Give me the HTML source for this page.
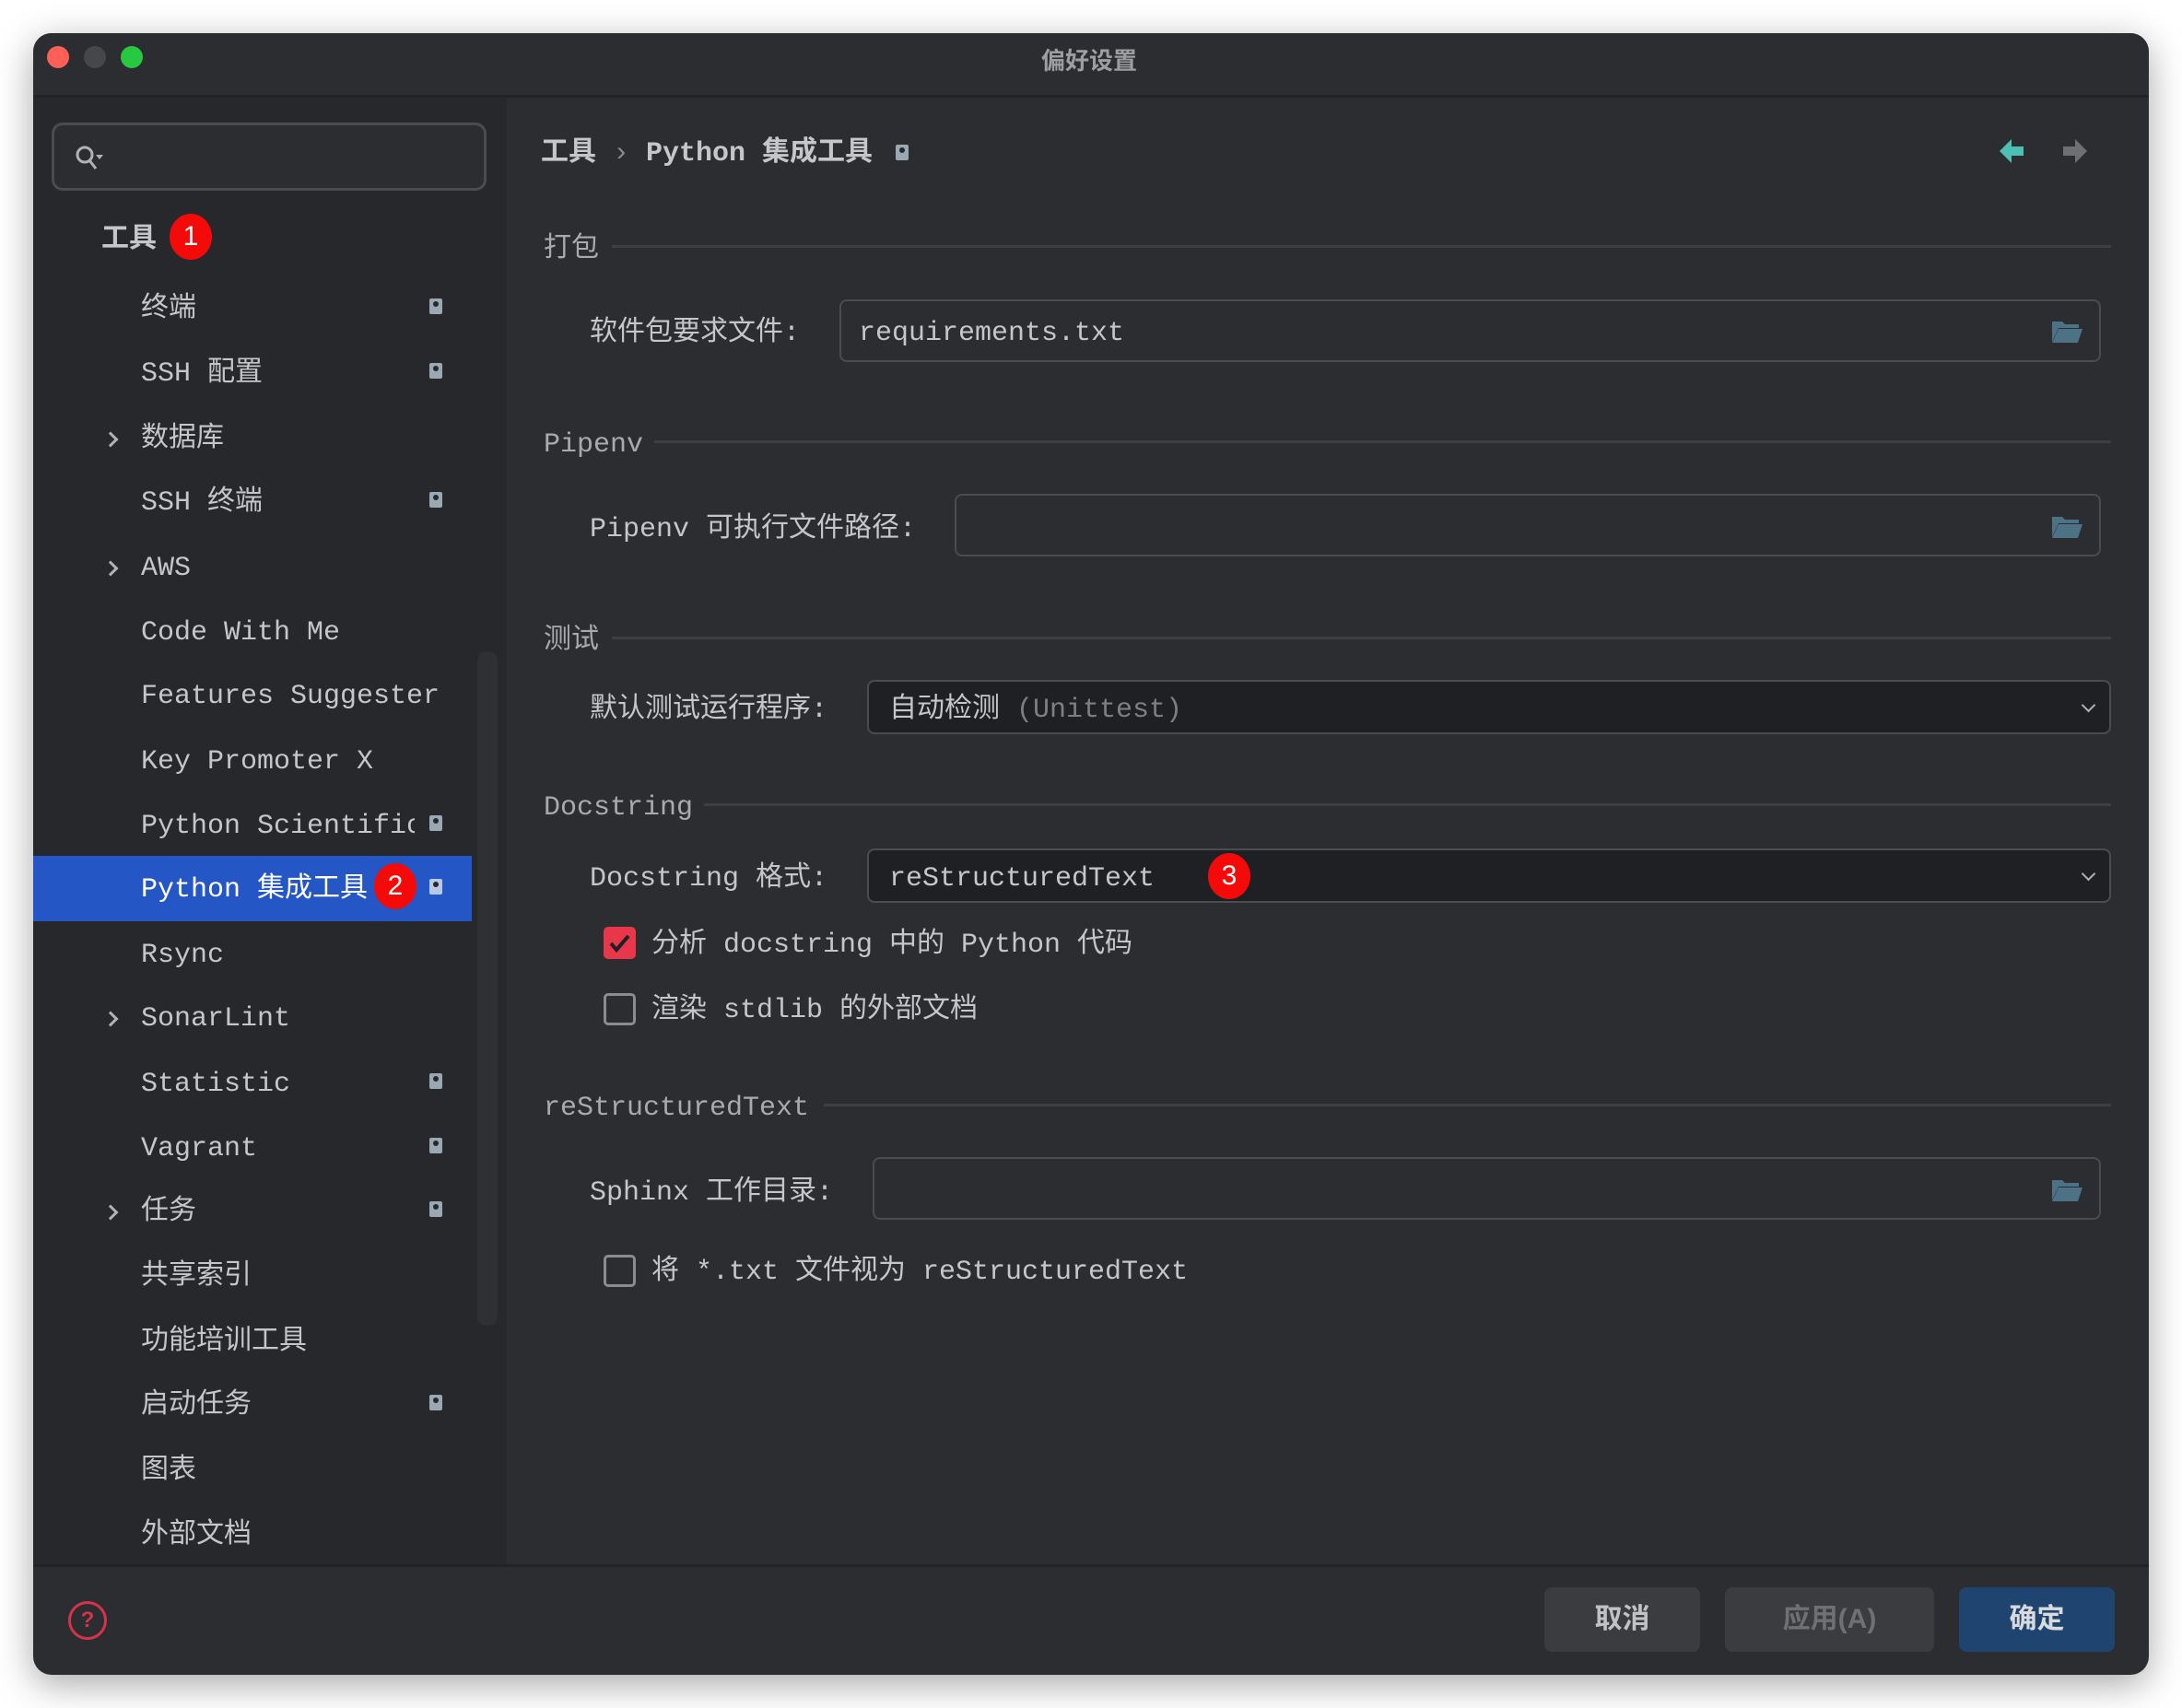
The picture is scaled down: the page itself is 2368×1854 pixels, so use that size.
<!DOCTYPE html>
<html><head><meta charset="utf-8"><style>
*{margin:0;padding:0;box-sizing:border-box}
body{width:2368px;height:1854px;background:#fff;position:relative;overflow:hidden;font-family:"Liberation Mono","Noto Sans CJK SC",monospace;color:#c4c6c9}
.a{position:absolute;white-space:nowrap}
.win{position:absolute;left:36px;top:36px;width:2296px;height:1782px;border-radius:20px;background:#2b2d30;overflow:hidden;box-shadow:0 10px 40px rgba(0,0,0,.35)}
.t{font-size:30px;line-height:40px;margin-top:4px}
.side{position:absolute;left:0;top:70px;width:514px;height:1594px;background:#26282b}
.sel{position:absolute;left:0;top:823px;width:476px;height:71px;background:#2456c6}
.badge{position:absolute;width:46px;height:50px;border-radius:50%;background:#f50a0a;color:#fff;font-family:"Liberation Sans",sans-serif;font-size:30px;text-align:center;line-height:50px}
.ic{position:absolute;width:14px;height:17px;background:#9aa8b4;border-radius:2px}
.ic:after{content:"";position:absolute;left:4px;top:3px;width:6px;height:6px;border-radius:50%;background:#26282b}
.arr{position:absolute;width:12px;height:12px;border-right:3px solid #b0b2b5;border-top:3px solid #b0b2b5;transform:rotate(45deg)}
.sec{color:#a8aaad}
.line{position:absolute;height:3px;background:#3d3f42}
.inp{position:absolute;border:2px solid #4a4c50;border-radius:8px;background:#2b2d30}
.sl{position:absolute;border:2px solid #4a4c50;border-radius:8px;background:#1f2023}
.fold{position:absolute;width:34px;height:26px}
.cb{position:absolute;width:35px;height:35px;border:3px solid #8a8c90;border-radius:5px}
.btn{position:absolute;top:1687px;height:70px;border-radius:8px;background:#3a3c40;font-family:"Liberation Sans","Noto Sans CJK SC",sans-serif;font-weight:bold;font-size:30px;text-align:center;line-height:70px}
</style></head><body>
<div class="win">
 <div class="a" style="left:0;top:0;width:2296px;height:70px;background:#2b2d30;border-bottom:3px solid #222325"></div>
 <div class="a" style="left:15px;top:14px;width:24px;height:24px;border-radius:50%;background:#fe5f57"></div>
 <div class="a" style="left:55px;top:14px;width:24px;height:24px;border-radius:50%;background:#45474a"></div>
 <div class="a" style="left:95px;top:14px;width:24px;height:24px;border-radius:50%;background:#28c840"></div>
 <div class="a" style="left:1094px;top:10px;font-family:'Liberation Sans','Noto Sans CJK SC',sans-serif;font-size:26px;font-weight:bold;color:#9c9ea1">偏好设置</div>

 <div class="side">
  <div class="a" style="left:20px;top:27px;width:472px;height:74px;border:3px solid #4a4c50;border-radius:12px;background:#2b2d30"></div>
  <svg class="a" style="left:44px;top:50px" width="36" height="34" viewBox="0 0 36 34"><circle cx="12" cy="12" r="8" fill="none" stroke="#b0b2b5" stroke-width="3"/><path d="M17 18l7 9" stroke="#b0b2b5" stroke-width="3"/><path d="M24 12h8l-4 5z" fill="#b0b2b5"/></svg>
  <div class="sel"></div>
 </div>
 <div class="a" style="left:482px;top:671px;width:22px;height:732px;background:#2e3033;border-radius:10px"></div>

 <div class="a t" style="left:74px;top:201px;font-weight:bold">工具</div>
 <div class="badge" style="left:148px;top:196px">1</div>
 <div class="a t" style="left:117px;top:276px">终端</div><div class="ic" style="left:430px;top:288px"></div>
 <div class="a t" style="left:117px;top:346px">SSH 配置</div><div class="ic" style="left:430px;top:358px"></div>
 <div class="arr" style="left:78px;top:435px"></div><div class="a t" style="left:117px;top:417px">数据库</div>
 <div class="a t" style="left:117px;top:486px">SSH 终端</div><div class="ic" style="left:430px;top:498px"></div>
 <div class="arr" style="left:78px;top:575px"></div><div class="a t" style="left:117px;top:557px">AWS</div>
 <div class="a t" style="left:117px;top:627px">Code With Me</div>
 <div class="a t" style="left:117px;top:696px">Features Suggester</div>
 <div class="a t" style="left:117px;top:767px">Key Promoter X</div>
 <div class="a t" style="left:117px;top:837px">Python Scientific</div><div class="a" style="left:414px;top:836px;width:40px;height:40px;background:#26282b"></div><div class="ic" style="left:430px;top:849px"></div>
 <div class="a t" style="left:117px;top:906px;color:#fff">Python 集成工具</div>
 <div class="badge" style="left:370px;top:901px">2</div><div class="ic" style="left:430px;top:918px;background:#b8c8e8"></div>
 <div class="a t" style="left:117px;top:977px">Rsync</div>
 <div class="arr" style="left:78px;top:1064px"></div><div class="a t" style="left:117px;top:1046px">SonarLint</div>
 <div class="a t" style="left:117px;top:1117px">Statistic</div><div class="ic" style="left:430px;top:1129px"></div>
 <div class="a t" style="left:117px;top:1187px">Vagrant</div><div class="ic" style="left:430px;top:1199px"></div>
 <div class="arr" style="left:78px;top:1274px"></div><div class="a t" style="left:117px;top:1256px">任务</div><div class="ic" style="left:430px;top:1268px"></div>
 <div class="a t" style="left:117px;top:1326px">共享索引</div>
 <div class="a t" style="left:117px;top:1397px">功能培训工具</div>
 <div class="a t" style="left:117px;top:1466px">启动任务</div><div class="ic" style="left:430px;top:1478px"></div>
 <div class="a t" style="left:117px;top:1537px">图表</div>
 <div class="a t" style="left:117px;top:1607px">外部文档</div>

 <div class="a t" style="left:551px;top:107px;font-weight:bold">工具 <span style="font-weight:normal;color:#888">›</span> Python 集成工具</div>
 <div class="ic" style="left:936px;top:121px"></div>
 <svg class="a" style="left:2134px;top:114px" width="28" height="28" viewBox="0 0 28 28"><path d="M0 14L13 1v8h13v10H13v8z" fill="#4dc0b5"/></svg>
 <svg class="a" style="left:2201px;top:114px" width="28" height="28" viewBox="0 0 28 28"><path d="M28 14L15 1v8H2v10h13v8z" fill="#6e6f71"/></svg>

 <div class="a t sec" style="left:554px;top:211px">打包</div><div class="line" style="left:628px;top:230px;width:1627px"></div>
 <div class="a t" style="left:604px;top:302px">软件包要求文件:</div>
 <div class="inp" style="left:875px;top:289px;width:1369px;height:68px"></div>
 <div class="a t" style="left:896px;top:302px">requirements.txt</div>
 <svg class="fold" style="left:2190px;top:310px" viewBox="0 0 34 26"><path d="M1 3h11l3 3h15v4H8L1 25z" fill="#4d7285"/><path d="M8 11h26l-5 15H1z" fill="#4d7285"/></svg>

 <div class="a t sec" style="left:554px;top:423px">Pipenv</div><div class="line" style="left:674px;top:442px;width:1581px"></div>
 <div class="a t" style="left:604px;top:515px">Pipenv 可执行文件路径:</div>
 <div class="inp" style="left:1000px;top:500px;width:1244px;height:68px"></div>
 <svg class="fold" style="left:2190px;top:522px" viewBox="0 0 34 26"><path d="M1 3h11l3 3h15v4H8L1 25z" fill="#4d7285"/><path d="M8 11h26l-5 15H1z" fill="#4d7285"/></svg>

 <div class="a t sec" style="left:554px;top:636px">测试</div><div class="line" style="left:628px;top:655px;width:1627px"></div>
 <div class="a t" style="left:604px;top:711px">默认测试运行程序:</div>
 <div class="sl" style="left:905px;top:702px;width:1350px;height:59px"></div>
 <div class="a t" style="left:929px;top:711px">自动检测 <span style="color:#7d7f82">(Unittest)</span></div>
 <div class="arr" style="left:2225px;top:724px;transform:rotate(135deg);width:11px;height:11px;border-width:2px"></div>

 <div class="a t sec" style="left:554px;top:817px">Docstring</div><div class="line" style="left:728px;top:836px;width:1527px"></div>
 <div class="a t" style="left:604px;top:894px">Docstring 格式:</div>
 <div class="sl" style="left:905px;top:885px;width:1350px;height:59px"></div>
 <div class="a t" style="left:929px;top:894px">reStructuredText</div>
 <div class="badge" style="left:1275px;top:890px">3</div>
 <div class="arr" style="left:2225px;top:907px;transform:rotate(135deg);width:11px;height:11px;border-width:2px"></div>

 <div class="a" style="left:619px;top:970px;width:35px;height:35px;border-radius:5px;background:#e8364a"></div>
 <svg class="a" style="left:619px;top:970px" width="35" height="35" viewBox="0 0 35 35"><path d="M8 18l6 7 13-15" fill="none" stroke="#1f2023" stroke-width="4"/></svg>
 <div class="a t" style="left:671px;top:966px">分析 docstring 中的 Python 代码</div>
 <div class="cb" style="left:619px;top:1042px"></div>
 <div class="a t" style="left:671px;top:1037px">渲染 stdlib 的外部文档</div>

 <div class="a t sec" style="left:554px;top:1143px">reStructuredText</div><div class="line" style="left:858px;top:1162px;width:1397px"></div>
 <div class="a t" style="left:604px;top:1235px">Sphinx 工作目录:</div>
 <div class="inp" style="left:911px;top:1220px;width:1333px;height:68px"></div>
 <svg class="fold" style="left:2190px;top:1242px" viewBox="0 0 34 26"><path d="M1 3h11l3 3h15v4H8L1 25z" fill="#4d7285"/><path d="M8 11h26l-5 15H1z" fill="#4d7285"/></svg>
 <div class="cb" style="left:619px;top:1326px"></div>
 <div class="a t" style="left:671px;top:1321px">将 *.txt 文件视为 reStructuredText</div>

 <div class="a" style="left:0;top:1662px;width:2296px;height:3px;background:#222325"></div>
 <div class="a" style="left:38px;top:1702px;width:42px;height:42px;border-radius:50%;border:3px solid #d4334a;color:#d4334a;font-family:'Liberation Sans',sans-serif;font-weight:bold;font-size:24px;text-align:center;line-height:36px">?</div>
 <div class="btn" style="left:1640px;width:169px;color:#c0c2c5">取消</div>
 <div class="btn" style="left:1836px;width:227px;color:#6e7073">应用(A)</div>
 <div class="btn" style="left:2090px;width:169px;background:#1f446f;color:#d8dadd">确定</div>
</div>
</body></html>
